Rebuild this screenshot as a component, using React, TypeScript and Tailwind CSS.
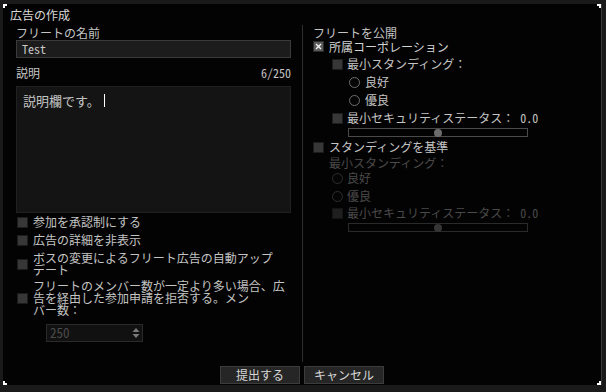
import React from "react";

const font = { fontFamily: '"Noto Sans CJK JP", "Noto Sans", sans-serif' };
const mono = { fontFamily: '"Noto Sans Mono CJK JP", "DejaVu Sans Mono", monospace' };

const Box = ({ checked, dim }: { checked?: boolean; dim?: boolean }) => (
    <div
        className={
            "w-[11px] h-[11px] shrink-0 border flex items-center justify-center " +
            (checked
                ? "bg-[#5a5a5a] border-[#2a2a2a]"
                : dim
                ? "bg-[#1f1f1f] border-[#141414]"
                : "bg-[#373737] border-[#1c1c1c]")
        }
    >
        {checked && (
            <svg width="7" height="7" viewBox="0 0 7 7">
                <path d="M1 1 L6 6 M6 1 L1 6" stroke="#f2f2f2" strokeWidth="1.4" />
            </svg>
        )}
    </div>
);

const Radio = ({ dim }: { dim?: boolean }) => (
    <div
        className={
            "w-[11px] h-[11px] shrink-0 rounded-full border bg-[#050505] " +
            (dim ? "border-[#2e2e2e]" : "border-[#6e6e6e]")
        }
    />
);

const Slider = ({ dim }: { dim?: boolean }) => (
    <div
        className={
            "ml-[35px] w-[180px] h-[9px] border flex items-center justify-center " +
            (dim ? "border-[#2a2a2a]" : "border-[#4a4a4a]")
        }
    >
        <div className={"w-[8px] h-[8px] rounded-full " + (dim ? "bg-[#353535]" : "bg-[#6c6c6c]")} />
    </div>
);

// multi-line label, one block per line
const Lines = ({ lines }: { lines: string[] }) => (
    <div className="flex flex-col">
        {lines.map((l) => (
            <div key={l} className="h-[12px] leading-[12px] whitespace-nowrap">
                {l}
            </div>
        ))}
    </div>
);

const Corner = ({ pos }: { pos: string }) => <div className={"absolute w-[4px] h-[4px] border-white " + pos} />;

export default function App() {
    return (
        <div className="w-[606px] h-[392px] bg-[#1a1a1a] overflow-hidden text-[12px] text-[#c4c4c4]" style={font}>
            <div className="relative ml-[3px] mt-[4px] w-[599px] h-[381px] bg-[#030303] border-r border-[#3a3a3a] flex flex-col">
                <Corner pos="left-0 top-0 border-l-2 border-t-2" />
                <Corner pos="right-0 top-0 border-r-2 border-t-2" />
                <Corner pos="left-0 bottom-0 border-l-2 border-b-2" />
                <Corner pos="right-0 bottom-0 border-r-2 border-b-2" />

                <div className="h-[21px] pl-[7px] leading-[21px] text-[#d8d8d8]">広告の作成</div>

                <div className="flex h-[337px]">
                    {/* left column */}
                    <div className="ml-[13px] w-[275px] flex flex-col">
                        <div className="h-[15px] leading-[15px]">フリートの名前</div>
                        <div className="h-[18px] bg-[#1c1c1c] border border-[#3a3a3a] pl-[5px] leading-[16px] text-[#c8c8c8]" style={mono}>
                            Test
                        </div>
                        <div className="mt-[8px] h-[14px] flex justify-between leading-[14px]">
                            <span>説明</span>
                            <span style={mono}>6/250</span>
                        </div>
                        <div className="mt-[6px] h-[127px] bg-[#141414] border border-[#202020] pl-[6px] pt-[7px]">
                            <div className="flex items-center h-[13px] text-[13px] leading-[13px]">
                                説明欄です。
                                <span className="ml-[4px] w-px h-[13px] bg-white" />
                            </div>
                        </div>

                        <div className="mt-[3px] flex items-center gap-[5px] h-[12px] pl-[1px]">
                            <Box />
                            <span className="leading-[12px]">参加を承認制にする</span>
                        </div>
                        <div className="mt-[6px] flex items-center gap-[5px] h-[12px] pl-[1px]">
                            <Box />
                            <span className="leading-[12px]">広告の詳細を非表示</span>
                        </div>
                        <div className="mt-[6px] flex items-center gap-[5px] pl-[1px]">
                            <Box />
                            <Lines lines={["ボスの変更によるフリート広告の自動アップ", "デート"]} />
                        </div>
                        <div className="mt-[4px] flex items-center gap-[5px] pl-[1px]">
                            <Box />
                            <Lines
                                lines={[
                                    "フリートのメンバー数が一定より多い場合、広",
                                    "告を経由した参加申請を拒否する。メン",
                                    "バー数：",
                                ]}
                            />
                        </div>
                        <div className="mt-[8px] ml-[30px] w-[97px] h-[18px] bg-[#111111] border border-[#2a2a2a] flex items-center justify-between pl-[3px] pr-[2px]">
                            <span className="text-[#4a4a4a] text-[13px] leading-[16px]" style={mono}>250</span>
                            <svg width="8" height="12" viewBox="0 0 8 12">
                                <path d="M4 1 L7.5 5 L0.5 5 Z M0.5 7 L7.5 7 L4 11 Z" fill="#7a7a7a" />
                            </svg>
                        </div>
                    </div>

                    <div className="ml-[11px] w-px bg-[#2e2e2e]" />

                    {/* right column */}
                    <div className="ml-[10px] flex flex-col">
                        <div className="h-[15px] leading-[15px]">フリートを公開</div>
                        <div className="h-[13px] flex items-center gap-[5px]">
                            <Box checked />
                            <span className="leading-[12px] text-[#d4d4d4]">所属コーポレーション</span>
                        </div>
                        <div className="mt-[5px] h-[12px] pl-[19px] flex items-center gap-[4px]">
                            <Box />
                            <span className="leading-[12px]">最小スタンディング：</span>
                        </div>
                        <div className="mt-[6px] h-[12px] pl-[36px] flex items-center gap-[5px]">
                            <Radio />
                            <span className="leading-[12px]">良好</span>
                        </div>
                        <div className="mt-[6px] h-[12px] pl-[36px] flex items-center gap-[5px]">
                            <Radio />
                            <span className="leading-[12px]">優良</span>
                        </div>
                        <div className="mt-[6px] h-[12px] pl-[19px] flex items-center gap-[4px]">
                            <Box />
                            <span className="leading-[12px]">
                                最小セキュリティステータス：<span style={mono}> 0.0</span>
                            </span>
                        </div>
                        <div className="mt-[4px]">
                            <Slider />
                        </div>

                        <div className="mt-[4px] h-[12px] flex items-center gap-[5px]">
                            <Box />
                            <span className="leading-[12px]">スタンディングを基準</span>
                        </div>
                        <div className="mt-[4px] h-[12px] pl-[16px] leading-[12px] text-[#4a4a4a]">最小スタンディング：</div>
                        <div className="mt-[3px] h-[12px] pl-[19px] flex items-center gap-[4px] text-[#4a4a4a]">
                            <Radio dim />
                            <span className="leading-[12px]">良好</span>
                        </div>
                        <div className="mt-[6px] h-[12px] pl-[19px] flex items-center gap-[4px] text-[#4a4a4a]">
                            <Radio dim />
                            <span className="leading-[12px]">優良</span>
                        </div>
                        <div className="mt-[5px] h-[12px] pl-[19px] flex items-center gap-[4px] text-[#4a4a4a]">
                            <Box dim />
                            <span className="leading-[12px]">
                                最小セキュリティステータス：<span style={mono}> 0.0</span>
                            </span>
                        </div>
                        <div className="mt-[4px]">
                            <Slider dim />
                        </div>
                    </div>
                </div>

                <div className="mt-[4px] flex justify-center gap-[4px]">
                    <button className="w-[80px] h-[18px] bg-[#262626] border border-[#3c3c3c] text-[#d8d8d8] text-[12px] leading-[16px]">
                        提出する
                    </button>
                    <button className="w-[80px] h-[18px] bg-[#262626] border border-[#3c3c3c] text-[#d8d8d8] text-[12px] leading-[16px]">
                        キャンセル
                    </button>
                </div>
            </div>
        </div>
    );
}
